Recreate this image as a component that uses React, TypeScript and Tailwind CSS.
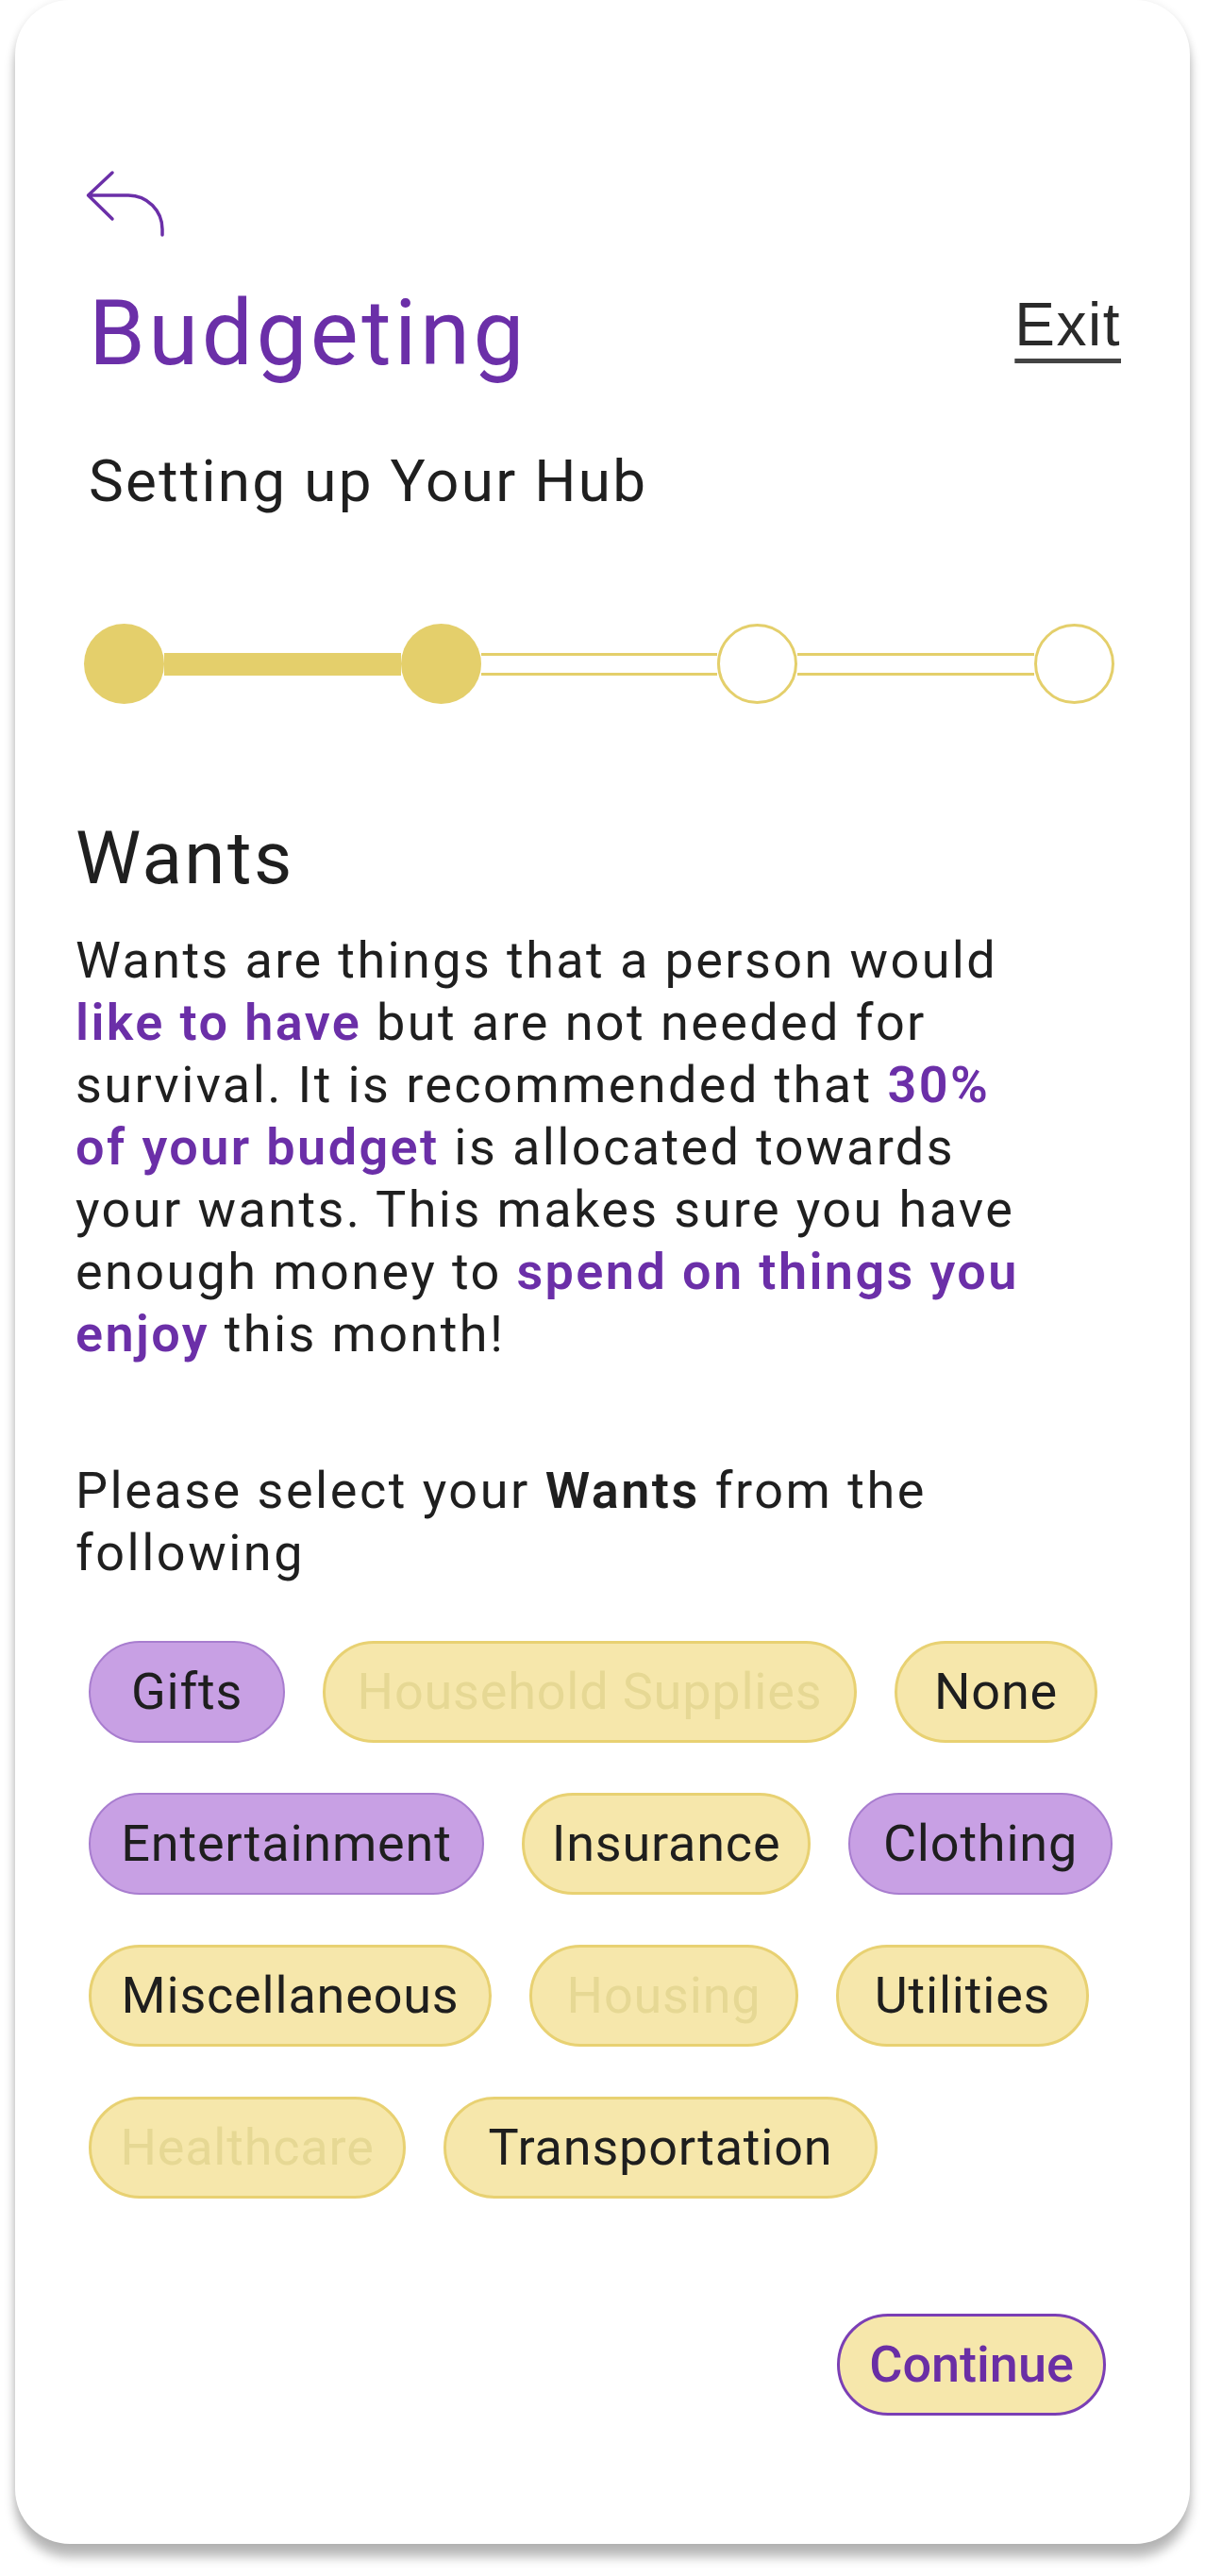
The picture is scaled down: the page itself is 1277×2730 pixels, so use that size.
import React from 'react';

type Chip = {
  label: string;
  width: string;
  kind: 'on' | 'off' | 'disabled';
};

const chips: Chip[] = [
  { label: 'Gifts', width: 'w-[208px]', kind: 'on' },
  { label: 'Household Supplies', width: 'w-[566px]', kind: 'disabled' },
  { label: 'None', width: 'w-[215px]', kind: 'off' },
  { label: 'Entertainment', width: 'w-[419px]', kind: 'on' },
  { label: 'Insurance', width: 'w-[306px]', kind: 'off' },
  { label: 'Clothing', width: 'w-[280px]', kind: 'on' },
  { label: 'Miscellaneous', width: 'w-[427px]', kind: 'off' },
  { label: 'Housing', width: 'w-[285px]', kind: 'disabled' },
  { label: 'Utilities', width: 'w-[268px]', kind: 'off' },
  { label: 'Healthcare', width: 'w-[336px]', kind: 'disabled' },
  { label: 'Transportation', width: 'w-[460px]', kind: 'off' },
];

const chipStyles = {
  on: 'bg-[#c8a0e4] border-[#a87dcf] border-2 text-[#1e1e1e]',
  off: 'bg-[#f6e7ab] border-[#e8d172] border-[3px] text-[#1e1e1e]',
  disabled: 'bg-[#f6e7ab] border-[#e8d172] border-[3px] text-[#e6d894]',
};

const BackArrow = () => (
  <svg width="86" height="72" viewBox="0 0 86 72" fill="none" className="ml-[4px]">
    <path
      d="M29 3 3.5 27 29 52M3.5 27H46a36 36 0 0 1 36 36v6"
      stroke="#6b2fa8"
      strokeWidth="3.5"
      strokeLinecap="round"
      strokeLinejoin="round"
    />
  </svg>
);

const Step = ({ filled }: { filled: boolean }) => (
  <div
    className={
      filled
        ? 'w-[85px] h-[85px] shrink-0 rounded-full bg-[#e4cf6b]'
        : 'w-[85px] h-[85px] shrink-0 rounded-full bg-white border-[3px] border-[#e4cf6b]'
    }
  />
);

const Hl = ({ children }: { children: React.ReactNode }) => (
  <span className="font-semibold text-[#6b2fa8]">{children}</span>
);

const App: React.FC = () => {
  return (
    <div className="bg-white w-[1277px] h-[2730px] font-['Roboto',sans-serif]">
      <div className="ml-[16px] w-[1245px] h-[2696px] bg-white rounded-[58px] shadow-[0_14px_12px_rgba(0,0,0,0.28),0_0_8px_rgba(0,0,0,0.08)] pl-[70px] pr-[73px] pt-[180px]">
        <BackArrow />

        <div className="mt-[53px] flex items-start justify-between">
          <h1 className="ml-[8px] text-[96px] leading-none tracking-[3.5px] text-[#6b2fa8]">Budgeting</h1>
          <a className="mt-[7px] font-['Liberation_Sans',sans-serif] text-[64px] leading-none tracking-[1.5px] text-[#2a2a2a] underline decoration-[5px] underline-offset-[14px] decoration-[#444]">
            Exit
          </a>
        </div>

        <p className="mt-[78px] ml-[8px] text-[62px] leading-none tracking-[2.3px] text-[#1f1f1f]">Setting up Your Hub</p>

        <div className="mt-[120px] ml-[3px] w-[1092px] flex items-center">
          <Step filled />
          <div className="flex-1 h-[24px] bg-[#e4cf6b]" />
          <Step filled />
          <div className="flex-1 h-[24px] border-y-[3px] border-[#e4cf6b] bg-white" />
          <Step filled={false} />
          <div className="flex-1 h-[24px] border-y-[3px] border-[#e4cf6b] bg-white" />
          <Step filled={false} />
        </div>

        <div className="-ml-[6px]">
          <h2 className="mt-[125px] text-[78px] leading-none tracking-[2.5px] text-[#1f1f1f]">Wants</h2>

          <p className="mt-[36px] text-[54px] leading-[66px] tracking-[2.4px] text-[#1f1f1f] whitespace-nowrap">
            Wants are things that a person would
            <br />
            <Hl>like to have</Hl> but are not needed for
            <br />
            survival. It is recommended that <Hl>30%</Hl>
            <br />
            <Hl>of your budget</Hl> is allocated towards
            <br />
            your wants. This makes sure you have
            <br />
            enough money to <Hl>spend on things you</Hl>
            <br />
            <Hl>enjoy</Hl> this month!
          </p>

          <p className="mt-[100px] text-[54px] leading-[66px] tracking-[2.5px] text-[#1f1f1f] whitespace-nowrap">
            Please select your <span className="font-semibold">Wants</span> from the
            <br />
            following
          </p>
        </div>

        <div className="mt-[60px] ml-[8px] flex flex-wrap gap-x-[40px] gap-y-[53px]">
          {chips.map((c) => (
            <div
              key={c.label}
              className={`${c.width} ${chipStyles[c.kind]} h-[108px] rounded-full flex items-center justify-center text-[54px] leading-none tracking-[0.8px]`}
            >
              {c.label}
            </div>
          ))}
        </div>

        <div className="mt-[122px] mr-[16px] flex justify-end">
          <button className="w-[285px] h-[108px] rounded-full bg-[#f6e7ab] border-[3px] border-[#7b3fb5] text-[54px] leading-none font-medium text-[#6a2ea5]">
            Continue
          </button>
        </div>
      </div>
    </div>
  );
};

export default App;
